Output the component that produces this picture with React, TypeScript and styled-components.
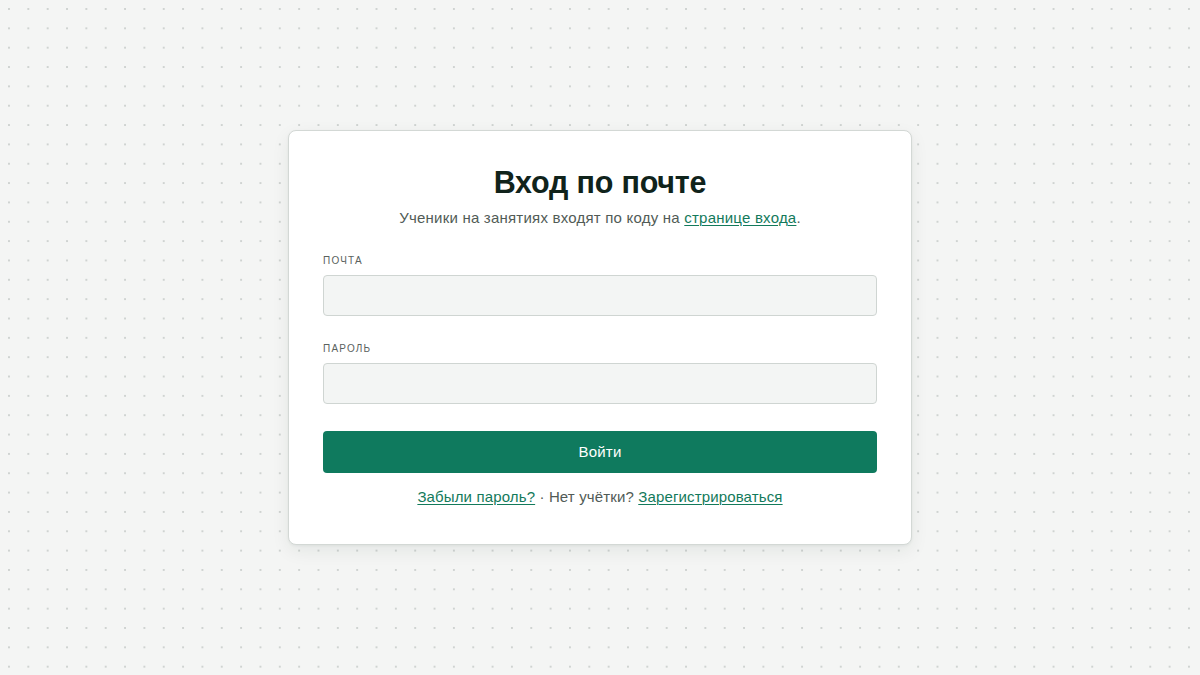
import React from "react";
import styled, { createGlobalStyle } from "styled-components";

const Global = createGlobalStyle`
  html, body { margin: 0; padding: 0; }
  body {
    font-family: "Liberation Sans", Arial, sans-serif;
    background: #f4f5f4;
  }
  * { box-sizing: border-box; }
`;

const Page = styled.div`
  width: 100vw;
  height: 100vh;
  display: flex;
  align-items: center;
  justify-content: center;
  background-color: #f4f5f4;
  background-image: radial-gradient(circle, #cfd3d1 0.9px, transparent 1.3px);
  background-size: 19.35px 19.35px;
  background-position: -0.7px -0.7px;
`;

const Card = styled.form`
  width: 624px;
  height: 415px;
  background: #ffffff;
  border: 1px solid #d3d8d5;
  border-radius: 8px;
  box-shadow: 0 6px 18px rgba(20, 40, 30, 0.07), 0 1px 3px rgba(20, 40, 30, 0.05);
  padding: 33px 34px 0;
  display: flex;
  flex-direction: column;
`;

const Title = styled.h1`
  margin: 0;
  text-align: center;
  font-size: 30.5px;
  line-height: 36px;
  font-weight: 700;
  color: #10231b;
  letter-spacing: -0.2px;
`;

const Subtitle = styled.p`
  margin: 7px 0 0;
  text-align: center;
  font-size: 15px;
  line-height: 22px;
  letter-spacing: 0.22px;
  color: #515b56;
`;

const Link = styled.a`
  color: #137a5b;
  text-decoration: underline;
  text-underline-offset: 2px;
  text-decoration-thickness: 1px;
  cursor: pointer;
`;

const Field = styled.div<{ $top: number }>`
  display: flex;
  flex-direction: column;
  gap: 7px;
  margin-top: ${(p) => p.$top}px;
`;

const Label = styled.label`
  font-size: 10px;
  line-height: 14px;
  letter-spacing: 1.2px;
  text-transform: uppercase;
  color: #5a625e;
`;

const Input = styled.input`
  width: 100%;
  height: 41px;
  background: #f3f5f4;
  border: 1px solid #cfd5d2;
  border-radius: 4px;
  padding: 0 12px;
  font: inherit;
  font-size: 15px;
  outline: none;
`;

const Button = styled.button`
  margin-top: 27px;
  width: 100%;
  height: 42px;
  padding: 0 0 2px;
  background: #0f7a5e;
  border: none;
  border-radius: 4px;
  color: #ffffff;
  font-family: inherit;
  font-size: 15px;
  letter-spacing: 0.2px;
  cursor: pointer;
`;

const Footer = styled.p`
  margin: 13px 0 0;
  text-align: center;
  font-size: 15px;
  line-height: 22px;
  letter-spacing: 0.14px;
  color: #515b56;
`;

export default function App() {
  return (
    <>
      <Global />
      <Page>
        <Card onSubmit={(e) => e.preventDefault()}>
          <Title>Вход по почте</Title>
          <Subtitle>
            Ученики на занятиях входят по коду на <Link>странице входа</Link>.
          </Subtitle>
          <Field $top={25}>
            <Label>Почта</Label>
            <Input type="email" />
          </Field>
          <Field $top={26}>
            <Label>Пароль</Label>
            <Input type="password" />
          </Field>
          <Button type="submit">Войти</Button>
          <Footer>
            <Link>Забыли пароль?</Link> · Нет учётки? <Link>Зарегистрироваться</Link>
          </Footer>
        </Card>
      </Page>
    </>
  );
}
